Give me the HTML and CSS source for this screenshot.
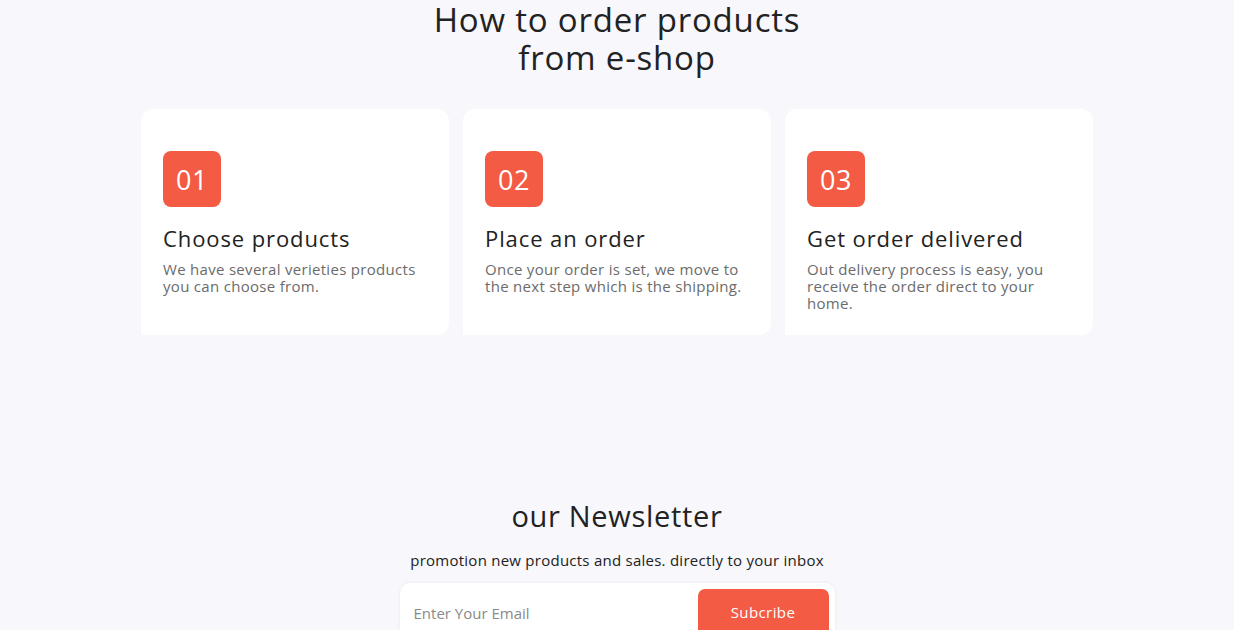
FILE: index.html
```html
<!DOCTYPE html>
<html lang="en">
<head>
<meta charset="utf-8">
<title>How to order</title>
<link rel="stylesheet" href="styles.css">
</head>
<body>
<section class="steps">
  <h2 class="steps-title">How to order products<br>from e-shop</h2>
  <div class="cards">
    <div class="card">
      <div class="badge">01</div>
      <h3 class="card-title">Choose products</h3>
      <p class="card-text">We have several verieties products you can choose from.</p>
    </div>
    <div class="card">
      <div class="badge">02</div>
      <h3 class="card-title">Place an order</h3>
      <p class="card-text">Once your order is set, we move to the next step which is the shipping.</p>
    </div>
    <div class="card">
      <div class="badge">03</div>
      <h3 class="card-title">Get order delivered</h3>
      <p class="card-text">Out delivery process is easy, you receive the order direct to your home.</p>
    </div>
  </div>
</section>
<section class="newsletter">
  <h2 class="news-title">our Newsletter</h2>
  <p class="news-sub">promotion new products and sales. directly to your inbox</p>
  <form class="news-form">
    <input class="news-input" type="text" placeholder="Enter Your Email">
    <button class="news-btn" type="button">Subcribe</button>
  </form>
</section>
</body>
</html>
```

FILE: styles.css
```css
* { box-sizing: border-box; }
html, body { margin: 0; padding: 0; }
body {
  background: #f7f7fc;
  font-family: "Open Sans", "Noto Sans", sans-serif;
  color: #232323;
  overflow: hidden;
}
.steps {
  display: flex;
  flex-direction: column;
  align-items: center;
  padding-top: 1px;
}
.steps-title {
  margin: 0;
  font-size: 33px;
  line-height: 38px;
  letter-spacing: 0.8px;
  font-weight: 500;
  text-align: center;
  color: #222;
}
.cards {
  margin-top: 32px;
  display: grid;
  grid-template-columns: repeat(3, 308px);
  gap: 14px;
}
.card {
  background: #fff;
  border-radius: 12px 12px 12px 0;
  padding: 42px 22px 22px 22px;
  height: 226px;
}
.badge {
  width: 58px;
  height: 56px;
  border-radius: 8px;
  background: #f35b45;
  color: #fff;
  font-size: 27px;
  letter-spacing: 0.5px;
  display: flex;
  align-items: center;
  justify-content: center;
  font-weight: 500;
}
.card-title {
  margin: 17px 0 0;
  font-size: 22px;
  line-height: 28px;
  letter-spacing: 0.9px;
  font-weight: 500;
  color: #222;
}
.card-text {
  margin: 9px 0 0;
  font-size: 15px;
  line-height: 17px;
  letter-spacing: 0.3px;
  color: #6b6b6b;
}
.newsletter {
  margin-top: 161px;
  display: flex;
  flex-direction: column;
  align-items: center;
}
.news-title {
  margin: 0;
  font-size: 29px;
  line-height: 40px;
  letter-spacing: 0.7px;
  font-weight: 500;
  color: #222;
}
.news-sub {
  margin: 14px 0 0;
  font-size: 15px;
  line-height: 20px;
  letter-spacing: 0.25px;
  color: #222;
}
.news-form {
  margin-top: 13px;
  width: 435px;
  height: 60px;
  background: #fff;
  border-radius: 10px;
  box-shadow: 0 0 4px rgba(0,0,0,0.06);
  display: flex;
  align-items: flex-start;
  padding: 6px 6px 0 14px;
}
.news-input {
  flex: 1;
  border: none;
  outline: none;
  background: transparent;
  font-family: inherit;
  font-size: 15px;
  color: #777;
  height: 46px;
  padding: 2px 0 0;
}
.news-input::placeholder { color: #8a8a8a; }
.news-btn {
  width: 131px;
  height: 50px;
  border: none;
  border-radius: 7px;
  background: #f35b45;
  color: #fff;
  font-family: inherit;
  font-size: 15px;
  letter-spacing: 0.4px;
  padding: 0 0 4px;
}
```
